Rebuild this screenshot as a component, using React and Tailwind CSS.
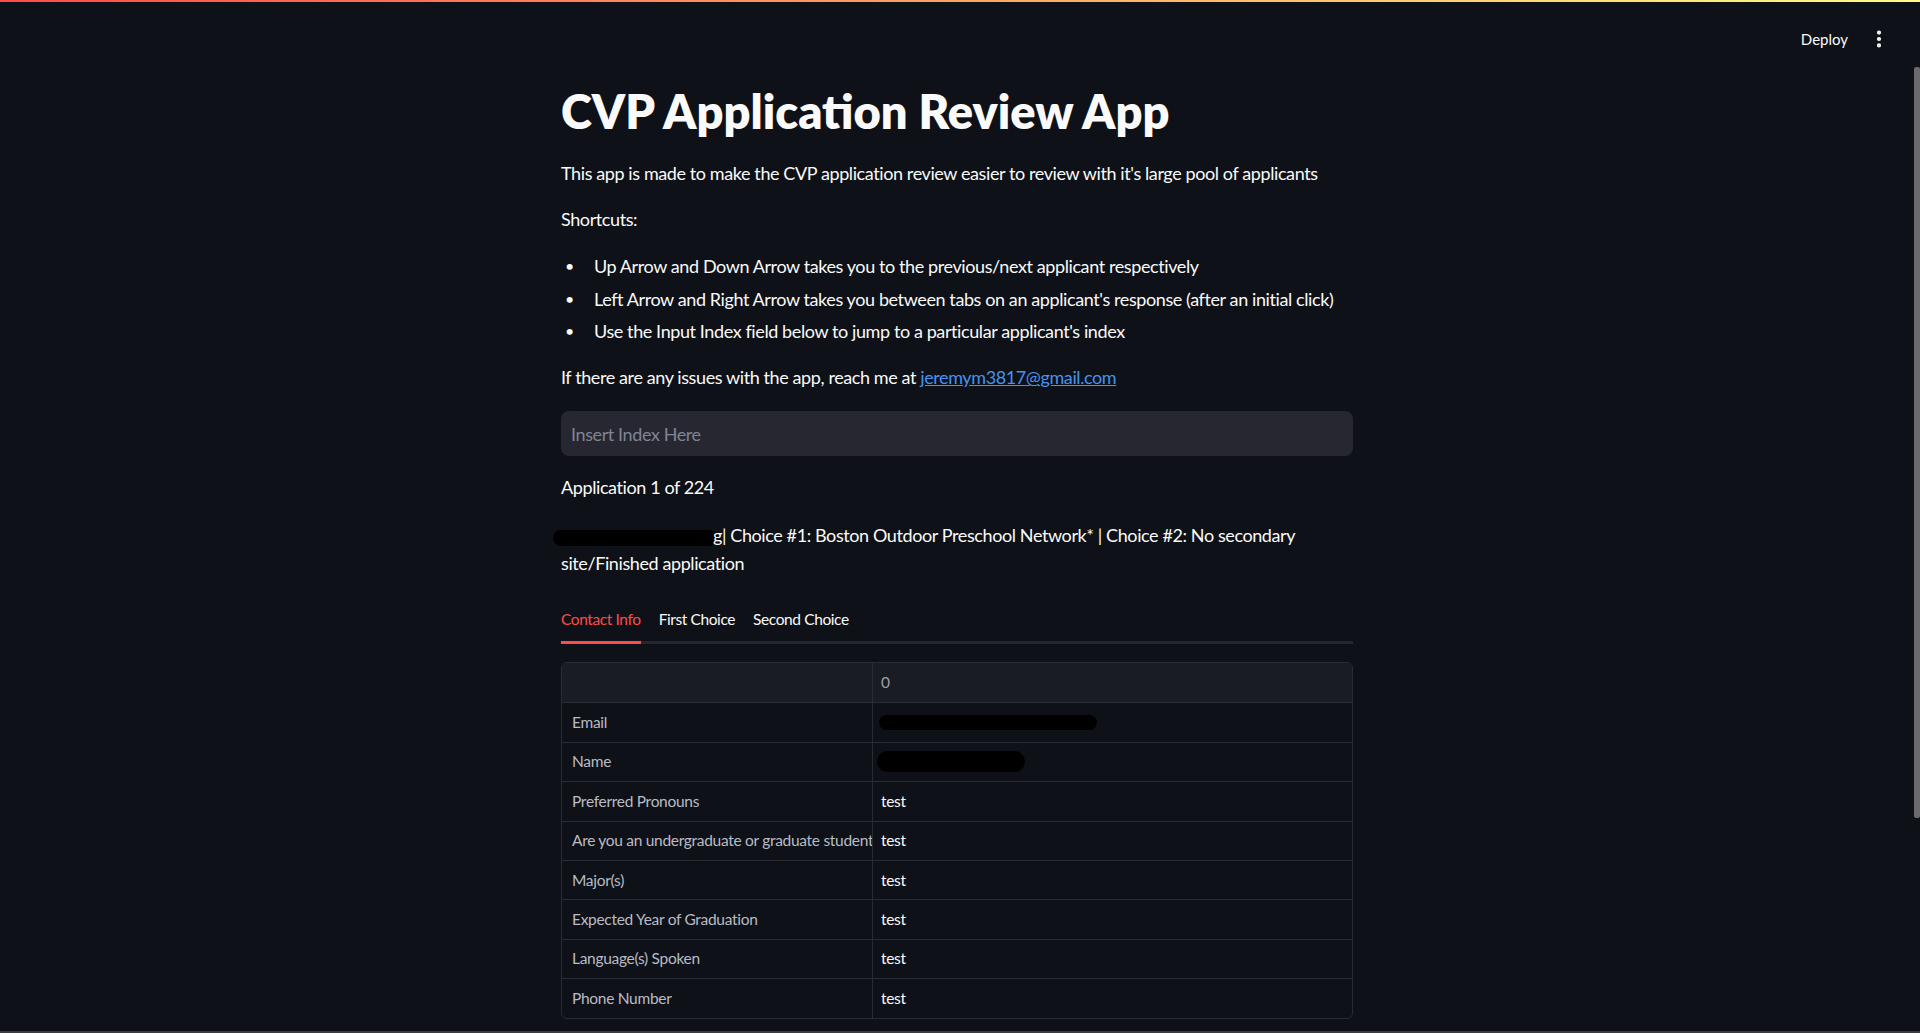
import { EllipsisVertical } from "lucide-react";

const rows = [
    ["Email", null, "h-[15px] w-[218px] ml-[-2px]"],
    ["Name", null, "h-[21px] w-[148px] ml-[-4px]"],
    ["Preferred Pronouns", "test"],
    ["Are you an undergraduate or graduate student", "test"],
    ["Major(s)", "test"],
    ["Expected Year of Graduation", "test"],
    ["Language(s) Spoken", "test"],
    ["Phone Number", "test"],
];

const shortcuts = [
    "Up Arrow and Down Arrow takes you to the previous/next applicant respectively",
    "Left Arrow and Right Arrow takes you between tabs on an applicant's response (after an initial click)",
    "Use the Input Index field below to jump to a particular applicant's index",
];

function Redacted({ className }) {
    return <span className={"inline-block align-middle rounded-full bg-black " + className} />;
}

export default function App() {
    return (
        <div className="relative h-[1033px] overflow-hidden border-b-2 border-[#3b3c40] bg-[#0e1117] text-[#fafafa] font-['Lato','Liberation_Sans',sans-serif]">
            <div className="h-[2px] bg-[linear-gradient(90deg,#ff4b4b,#fffd80)]" />

            {/* header */}
            <div className="flex h-[76px] items-center justify-end pr-[30px]">
                <span className="mt-[-2px] text-[15px] text-[#fafafa]">Deploy</span>
                <span className="ml-[20px] mt-[-2px] flex items-center">
                    <EllipsisVertical size={22} strokeWidth={2.6} />
                </span>
            </div>

            {/* scrollbar thumb */}
            <div className="absolute right-0 top-[67px] h-[751px] w-[6px] rounded-[2px] bg-[#6a6a6d]" />

            <div className="mx-auto w-[792px] translate-x-[-3px]">
                <h1 className="mt-[5px] text-[47px] font-extrabold leading-[1.2] tracking-[0px]">CVP Application Review App</h1>

                <div className="mt-[20px] text-[18px] leading-[28px] tracking-[-0.4px]">
                    <p>This app is made to make the CVP application review easier to review with it's large pool of applicants</p>
                    <p className="mt-[18px]">Shortcuts:</p>
                    <ul className="mt-[19px] flex flex-col gap-[4.5px]">
                        {shortcuts.map((s) => (
                            <li key={s} className="flex">
                                <span className="w-[33px] pl-[4px] text-[16px]">•</span>
                                <span>{s}</span>
                            </li>
                        ))}
                    </ul>
                    <p className="mt-[18px]">
                        If there are any issues with the app, reach me at{" "}
                        <a className="text-[#4593f1] underline" href="#">jeremym3817@gmail.com</a>
                    </p>

                    <div className="mt-[20px] flex h-[45px] items-center rounded-[8px] bg-[#262730] px-[10px] text-[#808495]">
                        Insert Index Here
                    </div>

                    <p className="mt-[17px]">Application 1 of 224</p>
                    <p className="mt-[20px]">
                        <Redacted className="ml-[-8px] mr-[-4px] h-[16px] w-[164px]" />
                        g| Choice #1: Boston Outdoor Preschool Network* | Choice #2: No secondary site/Finished application
                    </p>
                </div>

                {/* tabs */}
                <div className="mt-[20px]">
                    <div className="flex h-[44px] items-center gap-[18px] text-[15.5px] tracking-[-0.4px]">
                        <span className="text-[#ff4b4b]">Contact Info</span>
                        <span>First Choice</span>
                        <span>Second Choice</span>
                    </div>
                    <div className="flex h-[3px] bg-[#26272e]">
                        <div className="w-[80px] bg-[#ff4b4b]" />
                    </div>
                </div>

                {/* data table */}
                <div className="mt-[18px] overflow-hidden rounded-[6px] border border-[#2a2c34] text-[15.5px] tracking-[-0.3px]">
                    <div className="flex h-[39px] bg-[#1a1c23] text-[#9da0aa]">
                        <div className="w-[311px] border-r border-[#2a2c34]" />
                        <div className="flex flex-1 items-center px-[8px]">0</div>
                    </div>
                    {rows.map(([label, value, blob]) => (
                        <div key={label} className="flex h-[39.4px] border-t border-[#2a2c34]">
                            <div className="flex w-[311px] items-center overflow-hidden whitespace-nowrap border-r border-[#2a2c34] pl-[10px] text-[#b9bcc5]">
                                {label}
                            </div>
                            <div className="flex flex-1 items-center px-[8px] text-[#fafafa]">
                                {value ?? <Redacted className={blob} />}
                            </div>
                        </div>
                    ))}
                </div>
            </div>
        </div>
    );
}
